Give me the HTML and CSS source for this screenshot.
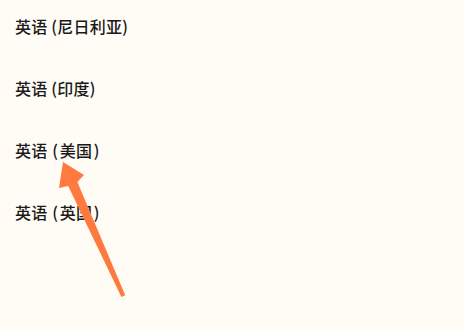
FILE: index.html
```html
<!DOCTYPE html>
<html lang="zh-CN">
<head>
<meta charset="utf-8">
<link rel="stylesheet" href="styles.css">
</head>
<body>
<ul class="list">
  <li class="item">英语 (尼日利亚)</li>
  <li class="item">英语 (印度)</li>
  <li class="item">英语 <span class="paren-open">(</span>美国<span class="paren-close">)</span></li>
  <li class="item">英语 <span class="paren-open">(</span>英国<span class="paren-close">)</span></li>
</ul>
<svg class="arrow" width="464" height="329" viewBox="0 0 464 329">
  <polygon points="63,162 84,175 77.4,181.9 125.2,295.2 121.4,297 68.2,185.9 59,188" fill="#ff7a3f"/>
</svg>
</body>
</html>
```
FILE: styles.css
```css
html, body {
  margin: 0;
  padding: 0;
  background: #fffcf5;
  width: 464px;
  height: 329px;
  overflow: hidden;
}
body {
  position: relative;
  font-family: "Noto Sans CJK SC", "Noto Sans", sans-serif;
}
.list {
  list-style: none;
  margin: 0;
  padding: 13px 0 0 15px;
  display: flex;
  flex-direction: column;
  gap: 36px;
}
.item {
  font-size: 16px;
  font-weight: 500;
  line-height: 26px;
  letter-spacing: 0.25px;
  color: #1a1a1a;
}
.paren-open {
  padding: 0 1.5px 0 1px;
}
.paren-close {
  padding-left: 1.5px;
}
.arrow {
  position: absolute;
  left: 0;
  top: 0;
}
```
